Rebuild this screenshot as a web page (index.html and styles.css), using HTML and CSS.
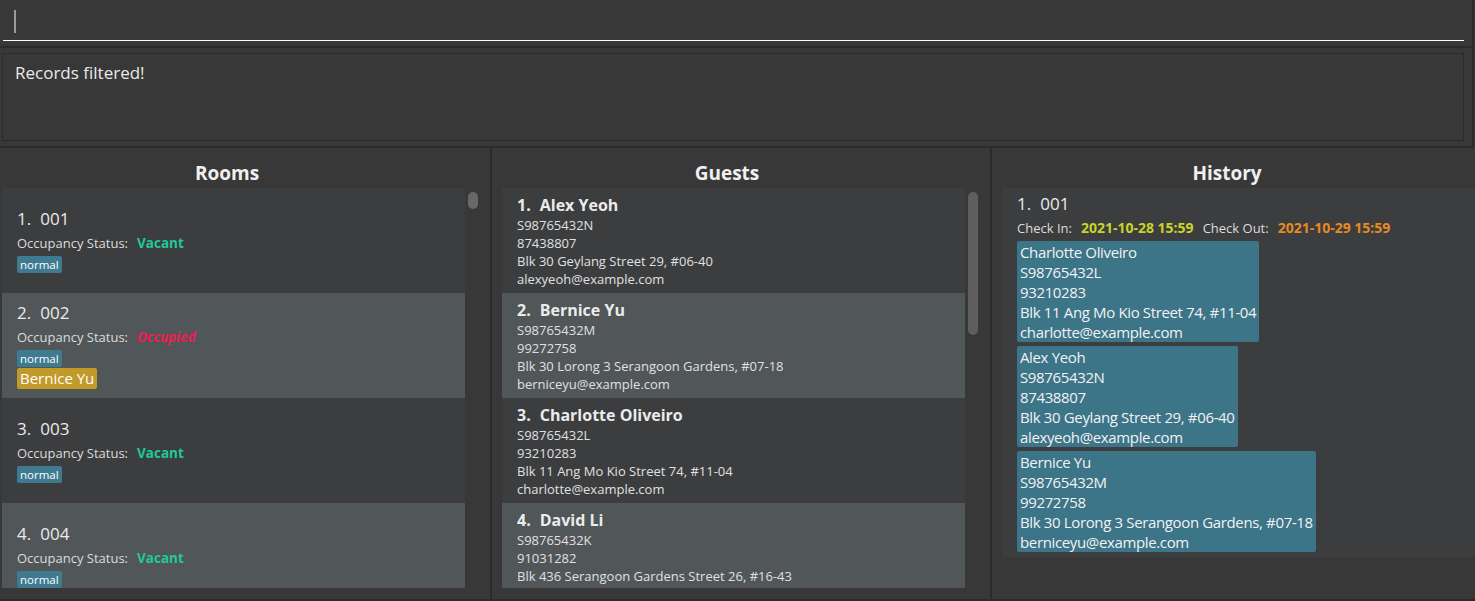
FILE: index.html
```html
<!DOCTYPE html>
<html>
<head>
<meta charset="utf-8">
<link rel="stylesheet" href="styles.css">
</head>
<body>
<div class="app">
  <div class="top">
    <div class="command">
      <div class="cmd-input"><span class="caret"></span></div>
    </div>
    <div class="result">
      <div class="result-box">Records filtered!</div>
    </div>
  </div>
  <div class="main">
    <section class="col col-rooms">
      <h2 class="col-title title-rooms">Rooms</h2>
      <div class="list-wrap">
        <div class="list">
          <div class="room-card dark">
            <div class="card-title"><span class="idx">1.</span><span>001</span></div>
            <div class="status"><span>Occupancy Status:</span><span class="vacant">Vacant</span></div>
            <div class="tags"><span class="tag">normal</span></div>
          </div>
          <div class="room-card light">
            <div class="card-title"><span class="idx">2.</span><span>002</span></div>
            <div class="status"><span>Occupancy Status:</span><span class="occupied">Occupied</span></div>
            <div class="tags"><span class="tag">normal</span></div>
            <div class="tags"><span class="guest-tag">Bernice Yu</span></div>
          </div>
          <div class="room-card dark">
            <div class="card-title"><span class="idx">3.</span><span>003</span></div>
            <div class="status"><span>Occupancy Status:</span><span class="vacant">Vacant</span></div>
            <div class="tags"><span class="tag">normal</span></div>
          </div>
          <div class="room-card light">
            <div class="card-title"><span class="idx">4.</span><span>004</span></div>
            <div class="status"><span>Occupancy Status:</span><span class="vacant">Vacant</span></div>
            <div class="tags"><span class="tag">normal</span></div>
          </div>
        </div>
        <div class="track"><div class="thumb thumb-rooms"></div></div>
      </div>
    </section>
    <div class="divider"></div>
    <section class="col col-guests">
      <h2 class="col-title title-guests">Guests</h2>
      <div class="list-wrap">
        <div class="list">
          <div class="guest-card dark">
            <div class="guest-name"><span class="idx">1.</span><span>Alex Yeoh</span></div>
            <div class="line">S98765432N</div>
            <div class="line">87438807</div>
            <div class="line">Blk 30 Geylang Street 29, #06-40</div>
            <div class="line">alexyeoh@example.com</div>
          </div>
          <div class="guest-card light">
            <div class="guest-name"><span class="idx">2.</span><span>Bernice Yu</span></div>
            <div class="line">S98765432M</div>
            <div class="line">99272758</div>
            <div class="line">Blk 30 Lorong 3 Serangoon Gardens, #07-18</div>
            <div class="line">berniceyu@example.com</div>
          </div>
          <div class="guest-card dark">
            <div class="guest-name"><span class="idx">3.</span><span>Charlotte Oliveiro</span></div>
            <div class="line">S98765432L</div>
            <div class="line">93210283</div>
            <div class="line">Blk 11 Ang Mo Kio Street 74, #11-04</div>
            <div class="line">charlotte@example.com</div>
          </div>
          <div class="guest-card light">
            <div class="guest-name"><span class="idx">4.</span><span>David Li</span></div>
            <div class="line">S98765432K</div>
            <div class="line">91031282</div>
            <div class="line">Blk 436 Serangoon Gardens Street 26, #16-43</div>
          </div>
        </div>
        <div class="track"><div class="thumb thumb-guests"></div></div>
      </div>
    </section>
    <div class="divider"></div>
    <section class="col col-history">
      <h2 class="col-title title-history">History</h2>
      <div class="history-panel">
        <div class="hist-title"><span class="idx">1.</span><span>001</span></div>
        <div class="checks">
          <span>Check In:</span><span class="check-in">2021-10-28 15:59</span>
          <span>Check Out:</span><span class="check-out">2021-10-29 15:59</span>
        </div>
        <div class="hist-guest">
          <div>Charlotte Oliveiro</div>
          <div>S98765432L</div>
          <div>93210283</div>
          <div>Blk 11 Ang Mo Kio Street 74, #11-04</div>
          <div>charlotte@example.com</div>
        </div>
        <div class="hist-guest">
          <div>Alex Yeoh</div>
          <div>S98765432N</div>
          <div>87438807</div>
          <div>Blk 30 Geylang Street 29, #06-40</div>
          <div>alexyeoh@example.com</div>
        </div>
        <div class="hist-guest">
          <div>Bernice Yu</div>
          <div>S98765432M</div>
          <div>99272758</div>
          <div>Blk 30 Lorong 3 Serangoon Gardens, #07-18</div>
          <div>berniceyu@example.com</div>
        </div>
      </div>
    </section>
  </div>
</div>
</body>
</html>
```

FILE: styles.css
```css
* { box-sizing: border-box; }
html, body {
  margin: 0;
  padding: 0;
  background: #383838;
  font-family: "Open Sans", "Noto Sans", sans-serif;
  color: #e6e6e6;
}
.app {
  width: 1475px;
  height: 601px;
  display: flex;
  flex-direction: column;
  overflow: hidden;
}
.top {
  width: 1474px;
  border-right: 2px solid #2b2b2b;
}
.command {
  height: 48px;
  border-bottom: 2px solid #2b2b2b;
}
.cmd-input {
  margin-left: 3px;
  width: 1461px;
  height: 41px;
  border-bottom: 1px solid #ffffff;
  padding-top: 10px;
  padding-left: 11px;
}
.caret {
  display: block;
  width: 2px;
  height: 23px;
  background: #9c9c9c;
}
.result {
  height: 100px;
  padding: 5px 0 0 2px;
  border-bottom: 2px solid #2b2b2b;
}
.result-box {
  width: 1462px;
  height: 88px;
  border: 1px solid #2b2b2b;
  padding: 8px 12px;
  font-size: 17px;
  line-height: 22px;
  color: #eaeaea;
}
.main {
  height: 453px;
  display: grid;
  grid-template-columns: 490px 2px 498px 2px 483px;
  border-bottom: 2px solid #2b2b2b;
}
.divider { background: #2b2b2b; }
.col { overflow: hidden; }
.col-title {
  margin: 0;
  height: 40px;
  padding-top: 13px;
  font-size: 19px;
  line-height: 24px;
  font-weight: 700;
  text-align: center;
  color: #f0f0f0;
}
.title-rooms { padding-right: 36px; }
.title-guests { padding-right: 28px; }
.title-history { padding-right: 23px; }
.list-wrap {
  display: flex;
  height: 400px;
}
.col-rooms .list-wrap { padding-left: 2px; }
.col-guests .list-wrap { padding-left: 10px; }
.list {
  width: 463px;
  height: 400px;
  overflow: hidden;
  background: #3c3d3f;
}
.track {
  width: 15px;
  padding: 4px 2px 0 3px;
}
.thumb {
  width: 10px;
  border-radius: 5px;
  background: #686868;
}
.thumb-rooms { height: 17px; }
.thumb-guests { height: 143px; background: #5e5e5e; }
.dark { background: #3c3d3f; }
.light { background: #515658; }
.room-card {
  height: 105px;
  flex-shrink: 0;
  display: flex;
  flex-direction: column;
  justify-content: center;
  padding-left: 15px;
}
.card-title {
  display: flex;
  gap: 9px;
  font-size: 17px;
  line-height: 22px;
  color: #ebebeb;
}
.status {
  display: flex;
  gap: 9px;
  margin-top: 4px;
  font-size: 13px;
  line-height: 18px;
  color: #dcdcdc;
}
.vacant { color: #1fc99a; font-weight: 700; font-size: 13.5px; }
.occupied { color: #ea1f52; font-weight: 700; font-style: italic; font-size: 13.5px; }
.tags { display: flex; }
.status + .tags { margin-top: 4px; }
.tag {
  display: inline-block;
  height: 17px;
  padding: 0 3px;
  font-size: 11.5px;
  line-height: 17px;
  color: #ffffff;
  background: #3e7b91;
  border-radius: 2px;
}
.guest-tag {
  display: inline-block;
  margin-top: 1px;
  height: 21px;
  padding: 0 3px;
  font-size: 15px;
  line-height: 21px;
  color: #ffffff;
  background: #c29a2a;
  border-radius: 2px;
}
.guest-card {
  height: 105px;
  padding: 6px 15px 0;
}
.guest-name {
  display: flex;
  gap: 9px;
  font-size: 16px;
  line-height: 22px;
  font-weight: 700;
  color: #ebebeb;
}
.line {
  font-size: 13px;
  line-height: 18px;
  color: #e0e0e0;
}
.col-history { padding-left: 10px; }
.history-panel {
  background: #3c3d3f;
  padding: 5px 0 5px 15px;
}
.hist-title {
  display: flex;
  gap: 9px;
  font-size: 17px;
  line-height: 22px;
  color: #ebebeb;
}
.checks {
  display: flex;
  align-items: baseline;
  gap: 9px;
  margin-top: 4px;
  font-size: 13px;
  line-height: 18px;
  color: #dcdcdc;
}
.check-in { color: #c9d42a; font-weight: 700; font-size: 14px; }
.check-out { color: #e68a22; font-weight: 700; font-size: 14px; }
.hist-guest {
  display: table;
  margin-top: 4px;
  padding: 1px 3px 0;
  height: 101px;
  font-size: 15px;
  line-height: 20px;
  letter-spacing: -0.36px;
  color: #f2f2f2;
  background: #3c7488;
  border-radius: 2px;
}
```
